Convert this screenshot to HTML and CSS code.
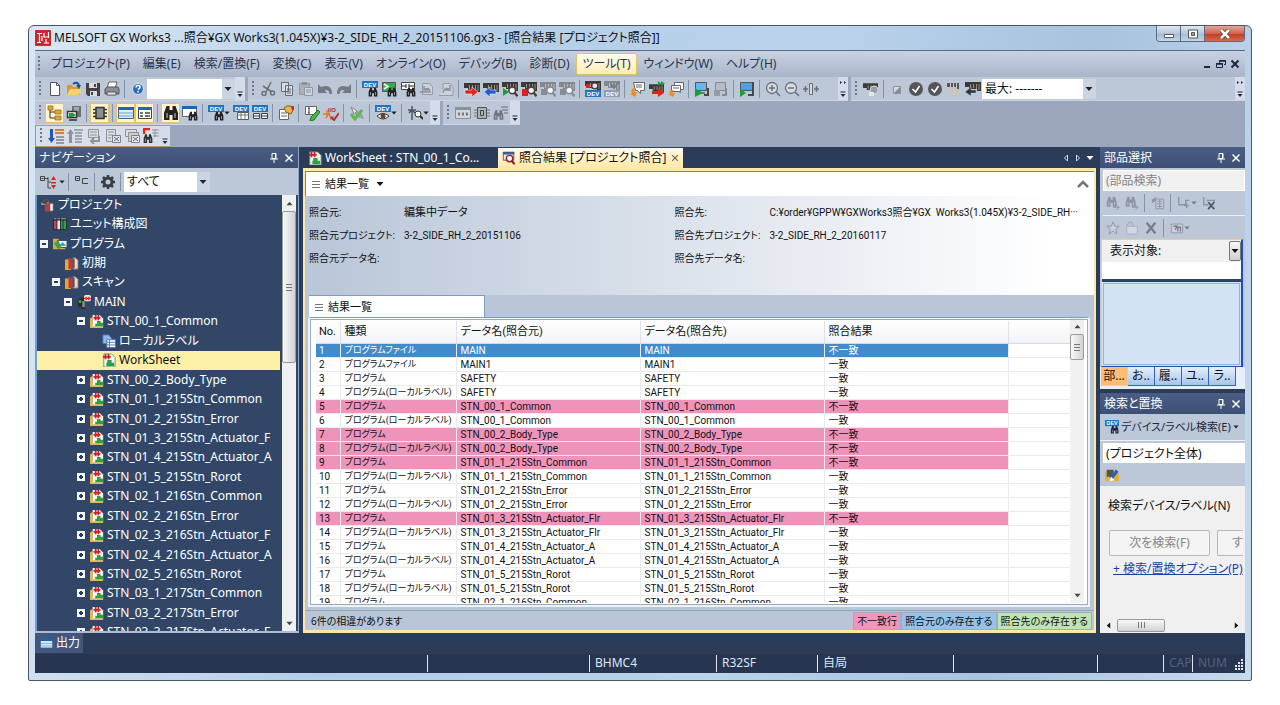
FILE: index.html
```html
<!DOCTYPE html>
<html lang="ja">
<head>
    <meta charset="utf-8">
    <title>MELSOFT GX Works3</title>
    <link rel="stylesheet" href="styles.css">
</head>
<body>

<!-- icons -->
<svg class="sprite" aria-hidden="true">
    <symbol id="logo" viewBox="0 0 16 16"><rect width="16" height="16" rx="1" fill="#d3232b"/><path d="M2 3.500h5M4.500 4v8M2 12.500h4M9 3v4h4M9 13h5M11 9v4M7 6v5M13.500 2v6" stroke="#fff" stroke-width="1.200" fill="none"/></symbol>
    <symbol id="bino" viewBox="0 0 16 16"><path d="M1 15V8l2.500-7h3v4h3V1h3L15 8v7H9.500v-5h-3v5z" fill="currentColor"/><path d="M4 8v5M12 8v5" stroke="#bcc7d8"/></symbol>
    <symbol id="glass" viewBox="0 0 16 16"><circle cx="7" cy="7" r="4.500" fill="#fff" fill-opacity=".85" stroke="currentColor" stroke-width="2"/><path d="M10 10l4 5" stroke="currentColor" stroke-width="3"/></symbol>
    <symbol id="module" viewBox="0 0 16 10"><path d="M0 0h16v9h-4V7H4V5H0z" fill="#3c3836"/><path d="M5.500 2v4M8.500 2v4M11.500 2v5M14 2v6" stroke="#9a8f86"/></symbol>
    <symbol id="module-off" viewBox="0 0 16 10"><path d="M0 0h16v9h-4V7H4V5H0z" fill="#83888f"/><path d="M5.500 2v4M8.500 2v4M11.500 2v5M14 2v6" stroke="#b9bec6"/></symbol>
    <symbol id="dev" viewBox="0 0 16 16"><rect width="16" height="7" fill="#1d74c4"/><text x="8" y="6" class="badge">DEV</text></symbol>

    <symbol id="new" viewBox="0 0 16 16"><path d="M3.500 1.500h6l3 3v10h-9z" fill="#fff" stroke="#555"/><path d="M9.500 1.500v3h3" fill="none" stroke="#555"/></symbol>
    <symbol id="open" viewBox="0 0 16 16"><path d="M1 14V4h5l1 2h7v8z" fill="#d99a2b"/><path d="M1 14l3-6h12l-3 6z" fill="#f8cf69"/><path d="M7 3q4-3 6 1" fill="none" stroke="#1d4f9c" stroke-width="2"/><path d="M10 4h5l-2 4z" fill="#1d4f9c"/></symbol>
    <symbol id="save" viewBox="0 0 16 16"><path d="M1 2h14v13H3l-2-2z" fill="#45413f"/><path d="M4 2h8v5H4zM5 10h7v5H5z" fill="#d8dde5"/><path d="M9 3h2v3H9zM6 11h2v3H6z" fill="#45413f"/></symbol>
    <symbol id="print" viewBox="0 0 16 16"><path d="M5 1h8l-2 6H3z" fill="#fff" stroke="#666"/><path d="M1 8l2-2h11l1 2v5H1z" fill="#8b8f95" stroke="#555"/><path d="M3 11h9v3H3z" fill="#e8ebee" stroke="#555"/></symbol>
    <symbol id="help" viewBox="0 0 16 16"><circle cx="8" cy="8" r="5.500" fill="#2e6cc0" stroke="#dbe7f6"/><path d="M6 6.500q0-2 2-2t2 1.700q0 1-2 2.300M8 10v1.500" fill="none" stroke="#fff" stroke-width="1.500"/></symbol>
    <symbol id="cut" viewBox="0 0 16 16"><path d="M11 1L6 11M3 5l9 6" stroke="#6d7279" stroke-width="1.600"/><circle cx="4" cy="12.500" r="2" fill="none" stroke="#6d7279" stroke-width="1.500"/><circle cx="12.500" cy="12" r="2" fill="none" stroke="#6d7279" stroke-width="1.500"/></symbol>
    <symbol id="copy" viewBox="0 0 16 16"><path d="M2.500 1.500h7v9h-7zM6.500 4.500h7v10h-7z" fill="#d9dee6" stroke="#666b73"/><path d="M8 8h4M8 10h4M8 12h4" stroke="#666b73"/></symbol>
    <symbol id="paste" viewBox="0 0 16 16"><path d="M1.500 2.500h10v11h-10z" fill="#aab2be" stroke="#9098a3"/><path d="M4 1h5v3H4z" fill="#8a919c"/><path d="M6.500 6.500h8v8h-8z" fill="#ccd3de" stroke="#9098a3"/><path d="M8 9h5M8 11h5" stroke="#9098a3"/></symbol>
    <symbol id="undo" viewBox="0 0 16 16"><path d="M1 3v9h9L7.500 9.500q4-2 5 3.500H15Q15 2 4 6z" fill="#747a83"/></symbol>
    <symbol id="redo" viewBox="0 0 16 16"><path d="M15 3v9H6l2.500-2.500q-4-2-5 3.500H1Q1 2 12 6z" fill="#747a83"/></symbol>
    <symbol id="devfind" viewBox="0 0 16 16"><use href="#dev" width="16" height="16"/><use href="#bino" x="6" y="6" width="10" height="10"/></symbol>
    <symbol id="cmdfind" viewBox="0 0 16 16"><path d="M1.500 1.500h13v9h-13z" fill="#2fae4d" stroke="#555"/><path d="M3 3l4 2.500L3 8" stroke="#fff" fill="none" stroke-width="1.500"/><use href="#bino" x="6" y="6" width="10" height="10"/></symbol>
    <symbol id="contactfind" viewBox="0 0 16 16"><path d="M1.500 1.500h13v7h-13z" fill="#fff" stroke="#444"/><path d="M2 5h4M6 3v4M9 3v4M9 5h5" stroke="#222"/><use href="#bino" x="6" y="6" width="10" height="10"/></symbol>
    <symbol id="docundo" viewBox="0 0 16 16"><path d="M3.500 2.500h7l3 3v8h-10z" fill="#ccd2dc" stroke="#969da8"/><path d="M5 5v4h4M6 8q4-2 5 3H1" fill="none" stroke="#8b929d" stroke-width="1.500"/></symbol>
    <symbol id="docredo" viewBox="0 0 16 16"><path d="M1 14.500h14v-9l-3-3H5v6" fill="#ccd2dc" stroke="#969da8"/><path d="M12 4v5H7M11 8q-5-2-6 4" fill="none" stroke="#8b929d" stroke-width="1.500"/></symbol>
    <symbol id="plcwrite" viewBox="0 0 16 16"><use href="#module" y="2" width="16" height="10"/><path d="M1 9h7V6l6 5-6 5v-3H1z" fill="#e5231e" stroke="#fff" stroke-width=".5"/></symbol>
    <symbol id="plcread" viewBox="0 0 16 16"><use href="#module" y="2" width="16" height="10"/><path d="M13 9H7V6l-6 5 6 5v-3h6z" fill="#1e5fd0" stroke="#fff" stroke-width=".5"/></symbol>
    <symbol id="monon" viewBox="0 0 16 16"><use href="#module" y="1" width="16" height="10"/><path d="M1 7l6 4-6 4z" fill="#1aa037"/><g color="#4b3a39"><use href="#glass" x="5" y="4" width="12" height="12"/></g></symbol>
    <symbol id="monoff" viewBox="0 0 16 16"><use href="#module" y="1" width="16" height="10"/><path d="M1 8h6v7H1z" fill="#d8231f"/><g color="#4b3a39"><use href="#glass" x="5" y="4" width="12" height="12"/></g></symbol>
    <symbol id="mongray" viewBox="0 0 16 16"><use href="#module-off" y="1" width="16" height="10"/><path d="M1 8h6v6H1z" fill="#868c95"/><g color="#868c95"><use href="#glass" x="5" y="4" width="12" height="12"/></g></symbol>
    <symbol id="devmon" viewBox="0 0 16 16"><use href="#module" width="16" height="10"/><path d="M1 3h4v4H1z" fill="#d8231f"/><g color="#4b3a39"><use href="#glass" x="5" y="0" width="11" height="11"/></g><use href="#dev" y="9" width="16" height="16"/></symbol>
    <symbol id="devmongray" viewBox="0 0 16 16"><use href="#module-off" width="16" height="10"/><path d="M7 3l3 4 5-6" stroke="#777d86" stroke-width="2" fill="none"/><path d="M0 9h16v7H0z" fill="#969da8"/><text x="8" y="15" class="badge">DEV</text></symbol>
    <symbol id="conv" viewBox="0 0 16 16"><path d="M3.500 1.500h11v8h-4v3l-3-3h-2z" fill="#fff" stroke="#666"/><path d="M6 4h6M6 6h6" stroke="#666"/><path d="M4 7q-4 1-2 6H0l5 3 2-5H5q-2-2 1-3z" fill="#f08a1c"/></symbol>
    <symbol id="onlineconv" viewBox="0 0 16 16"><use href="#module" y="3" width="15" height="10"/><path d="M3 10h6V7l6 5-6 4v-3H3z" fill="#e5231e"/><path d="M9 0l3 2.500L9 5zM12 0l4 2.500L12 5z" fill="#1aa037"/></symbol>
    <symbol id="allconv" viewBox="0 0 16 16"><path d="M6.500 1.500h9v7h-3v3l-4-3h-2z" fill="#fff" stroke="#666"/><path d="M3.500 4.500h9v6h-9z" fill="#fff" stroke="#666"/><path d="M5 7h6" stroke="#666"/><path d="M4 9q-4 1-2 4H0l5 3 2-4H5q-2-1 1-3z" fill="#f08a1c"/></symbol>
    <symbol id="simstart" viewBox="0 0 16 16"><path d="M1.500 1.500h11v8h-11z" fill="#65b7ef" stroke="#555"/><path d="M3 11h8v2H3z" fill="#777"/><path d="M1 7l8 5-8 4z" fill="#1aa037"/><path d="M14 7v7h-4" fill="none" stroke="#4a4745" stroke-width="2"/></symbol>
    <symbol id="simstop" viewBox="0 0 16 16"><path d="M2.500 1.500h10v8h-10z" fill="#b5bcc7" stroke="#858b94"/><path d="M1 9h6v6H1z" fill="#959ba5"/><path d="M13 7v7H9" fill="none" stroke="#858b94" stroke-width="2"/></symbol>
    <symbol id="syssim" viewBox="0 0 16 16"><path d="M1.500 1.500h12v8h-12z" fill="#4d9fe2" stroke="#555"/><path d="M1 8l6 4-6 4zM9 12h5" fill="#1aa037"/><path d="M14 1v13H9" fill="none" stroke="#4a4745" stroke-width="2"/></symbol>
    <symbol id="zoomin" viewBox="0 0 16 16"><circle cx="7" cy="7" r="5.500" fill="#d5dbe5" stroke="#6a6f77" stroke-width="1.300"/><path d="M11 11l4 4M4 7h6M7 4v6" stroke="#6a6f77" stroke-width="1.500"/></symbol>
    <symbol id="zoomout" viewBox="0 0 16 16"><circle cx="7" cy="7" r="5.500" fill="#d5dbe5" stroke="#6a6f77" stroke-width="1.300"/><path d="M11 11l4 4M4 7h6" stroke="#6a6f77" stroke-width="1.500"/></symbol>
    <symbol id="fit" viewBox="0 0 16 16"><path d="M6.500 2.500h3v11h-3z" fill="#d5dbe5" stroke="#6a6f77"/><path d="M0 8h5M16 8h-5M2.500 5v6M13.500 5v6" stroke="#6a6f77" stroke-width="1.500"/></symbol>
    <symbol id="modsel" viewBox="0 0 16 16"><use href="#module" y="2" width="15" height="10"/><circle cx="11" cy="9" r="4" fill="#9a9fa6" stroke="#d0d5dc"/><path d="M6 11h5v4H6z" fill="#e3e6ea"/></symbol>
    <symbol id="stopbox" viewBox="0 0 16 16"><path d="M4.500 5.500h7v7h-7z" fill="#d5d8dc" stroke="#8d929a"/><path d="M11 6v6H5z" fill="#858b94"/></symbol>
    <symbol id="okball" viewBox="0 0 16 16"><circle cx="8" cy="8" r="7" fill="#55565a"/><path d="M4.500 8l3 3 4-6" fill="none" stroke="#fff" stroke-width="1.600"/></symbol>
    <symbol id="modhold" viewBox="0 0 16 16"><path d="M3 6h11v8H3z" fill="#c9c6c0"/><path d="M1 2h12v6h-2V6H1z" fill="#5a5653"/><path d="M4.500 2v4M7.500 2v4M10.500 2v5" stroke="#bcc7d8"/></symbol>
    <symbol id="modback" viewBox="0 0 16 16"><use href="#module" y="1" width="16" height="10"/><path d="M11 9H6V6l-6 5 6 4v-3h5z" fill="#333" stroke="#bcc7d8" stroke-width=".5"/></symbol>

    <symbol id="navtree" viewBox="0 0 16 16"><path d="M3 4v9h6M3 7h6" fill="none" stroke="#333"/><path d="M1 1h5v4H1zM8 5h6v4H8zM8 11h6v4H8z" fill="#e8a735" stroke="#8b5f13" stroke-width=".7"/></symbol>
    <symbol id="connect" viewBox="0 0 16 16"><path d="M6 1h9v11H6z" fill="#6c7178"/><path d="M8 3h5M8 5h5" stroke="#ddd"/><path d="M1.500 6.500h9v6h-9z" fill="#fff" stroke="#333" stroke-width="1.500"/><path d="M3 8h4l3 2-3 2H3z" fill="#1aa037"/><path d="M3 15h8" stroke="#333" stroke-width="1.500"/></symbol>
    <symbol id="chip" viewBox="0 0 16 16"><path d="M1 4.500h14M1 8h14M1 11.500h14" stroke="#333" stroke-width="1.500"/><path d="M4 2.500h8v11H4z" fill="#8c8e90" stroke="#333" stroke-width="1.500"/></symbol>
    <symbol id="win" viewBox="0 0 16 16"><path d="M.500 2.500h15v11H.500z" fill="#dbeefa" stroke="#39688f"/><path d="M0 2h16v3H0z" fill="#1d66b5"/><path d="M1 8h14M1 11h14" stroke="#6aa4cf"/></symbol>
    <symbol id="prog" viewBox="0 0 16 16"><path d="M1.500 2.500h13v11h-13z" fill="#fff" stroke="#444"/><path d="M1 2h14v3H1z" fill="#1d66b5"/><path d="M3 8h3M3 11h3M8 8h5M8 11h5" stroke="#444" stroke-width="1.500"/></symbol>
    <symbol id="finder" viewBox="0 0 16 16"><use href="#bino" width="16" height="16"/></symbol>
    <symbol id="findres" viewBox="0 0 16 16"><path d="M.500 1.500h14v10H.500z" fill="#fff" stroke="#666"/><path d="M0 1h15v3H0z" fill="#1d66b5"/><use href="#bino" x="6" y="6" width="10" height="10"/></symbol>
    <symbol id="devtable" viewBox="0 0 16 16"><path d="M4.500 7.500h11v7h-11z" fill="#fff" stroke="#555"/><path d="M4 10h12M8 7v8M12 7v8" stroke="#777"/><use href="#dev" width="16" height="16"/></symbol>
    <symbol id="devbatch" viewBox="0 0 16 16"><path d="M1.500 8.500h6v5h-6zM9.500 8.500h6v5h-6z" fill="#eee" stroke="#444"/><path d="M1 11h7M9 11h7" stroke="#444"/><use href="#dev" width="16" height="16"/></symbol>
    <symbol id="prop" viewBox="0 0 16 16"><path d="M1.500 4.500h9v10h-9z" fill="#fff" stroke="#666"/><path d="M3 8h6M3 11h6" stroke="#666"/><path d="M6 3l3-2h4l2 4-2 4-5-2z" fill="#e9b64a" stroke="#8b5f13"/><path d="M13 1h3v4h-2z" fill="#c9302c"/></symbol>
    <symbol id="edit" viewBox="0 0 16 16"><path d="M1.500 1.500h11v8h-11z" fill="#fff" stroke="#666"/><path d="M5 3v5M4 3h2M4 8h2" stroke="#333"/><path d="M14 5l2 2-6 8-4 1 1-4z" fill="#42b649" stroke="#22752a"/></symbol>
    <symbol id="io" viewBox="0 0 16 16"><text x="9" y="7" class="badge io">I/O</text><path d="M0 9h4V5M3 13l3-5 2 6 3-3" fill="none" stroke="#e8772b" stroke-width="1.500"/><path d="M8 12l3 3 5-7" fill="none" stroke="#b3303a" stroke-width="2"/></symbol>
    <symbol id="check" viewBox="0 0 16 16"><path d="M2 2l5 3 6 4 2 5-5-1-6-5z" fill="#9ca2aa"/><path d="M2 2l6 4-3 3z" fill="#e3e7ed" stroke="#888"/><path d="M2 9l4 5 7-9" fill="none" stroke="#5cb84f" stroke-width="3"/></symbol>
    <symbol id="deveye" viewBox="0 0 16 16"><path d="M2 11q6-5 12 0-6 6-12 0z" fill="#fff" stroke="#333"/><circle cx="8" cy="11" r="2.500" fill="#7b3b1c"/><use href="#dev" width="16" height="16"/></symbol>
    <symbol id="probe" viewBox="0 0 16 16"><path d="M5 1v14M1 5h8M2 8l3-3 3 3" fill="none" stroke="#555" stroke-width="1.500"/><circle cx="11" cy="9" r="3" fill="#fff" stroke="#333"/><path d="M13 11l3 3" stroke="#333" stroke-width="2"/></symbol>
    <symbol id="wingray" viewBox="0 0 16 16"><path d="M.500 2.500h15v11H.500z" fill="#d2d7de" stroke="#888e97"/><path d="M0 2h16v3H0z" fill="#8c9199"/><path d="M3 9h2M7 9h2M11 9h2" stroke="#777" stroke-width="3"/></symbol>
    <symbol id="chipgray" viewBox="0 0 16 16"><path d="M3.500 2.500h9v11h-9z" fill="#aeb3bb" stroke="#555"/><path d="M6.500 5.500h3v5h-3z" fill="none" stroke="#444"/><path d="M0 5h3M0 8h3M0 11h3M13 5h3M13 8h3M13 11h3" stroke="#777"/></symbol>
    <symbol id="findgray" viewBox="0 0 16 16"><g color="#70757d"><use href="#bino" y="4" width="11" height="12"/></g><path d="M8 2h7M9 5h6M11 8h4" stroke="#858b94" stroke-width="1.500"/></symbol>
    <symbol id="linedown" viewBox="0 0 16 16"><path d="M2 1h3v9h2l-3.500 5L0 10h2z" fill="#2457b5"/><path d="M7 2h9M7 5h9" stroke="#e07b2f" stroke-width="2"/><path d="M8 9h8M8 12h8M8 15h8" stroke="#555"/></symbol>
    <symbol id="lineup" viewBox="0 0 16 16"><path d="M2 15h3V6h2L3.500 1 0 6h2z" fill="#8e939b"/><path d="M7 2h9M8 5h7M8 8h7M8 11h7M8 14h7" stroke="#8e939b" stroke-width="1.500"/></symbol>
    <symbol id="lineget" viewBox="0 0 16 16"><path d="M2.500 1.500h10v8h-10z" fill="#ddd" stroke="#8e939b"/><path d="M4 4h7M4 7h7" stroke="#8e939b"/><path d="M13 8v5H6M8 10l-3 3 3 3" fill="none" stroke="#8e939b" stroke-width="2"/></symbol>
    <symbol id="linedel" viewBox="0 0 16 16"><path d="M1.500 1.500h9v12h-9z" fill="#ddd" stroke="#8e939b"/><path d="M3 4h6M3 7h5M3 10h3" stroke="#8e939b"/><path d="M7.500 7.500h8v7h-8z" fill="#e4e7ec" stroke="#7d828a"/><path d="M9 9l5 4M14 9l-5 4" stroke="#666"/></symbol>
    <symbol id="linedelall" viewBox="0 0 16 16"><path d="M1.500 1.500h11v7h-11z" fill="#ddd" stroke="#8e939b"/><path d="M4.500 4.500h10v9h-10z" fill="#ccc" stroke="#8e939b"/><path d="M7.500 7.500h8v7h-8z" fill="#e4e7ec" stroke="#7d828a"/><path d="M9 9l5 4M14 9l-5 4" stroke="#666"/></symbol>
    <symbol id="findjump" viewBox="0 0 16 16"><g color="#333"><use href="#bino" y="5" width="10" height="11"/></g><path d="M1 6V1h6" fill="none" stroke="#e5231e" stroke-width="2.500"/><path d="M9 2h7M9 5h7M10 8h6M12 1v8" stroke="#8e939b"/></symbol>

    <symbol id="more" viewBox="0 0 8 20"><path d="M1.500 13h5" stroke="#1b293e"/><path d="M1.500 15h5l-2.500 3z" fill="#1b293e"/></symbol>
    <symbol id="more2" viewBox="0 0 8 20"><path d="M1 2l2 1.500L1 5zM5 2l2 1.500L5 5z" fill="#1b293e"/><path d="M1.500 13h5" stroke="#1b293e"/><path d="M1.500 15h5l-2.500 3z" fill="#1b293e"/></symbol>
    <symbol id="down" viewBox="0 0 8 8"><path d="M.500 2h7L4 6z" fill="currentColor"/></symbol>
    <symbol id="up" viewBox="0 0 8 8"><path d="M.500 6h7L4 2z" fill="currentColor"/></symbol>
    <symbol id="lt" viewBox="0 0 8 8"><path d="M6 .500v7L2 4z" fill="currentColor"/></symbol>
    <symbol id="rt" viewBox="0 0 8 8"><path d="M2 .500v7L6 4z" fill="currentColor"/></symbol>
    <symbol id="pin" viewBox="0 0 10 10"><path d="M3 .500h4v5H3zM1 6h8M5 6v4" fill="none" stroke="currentColor"/><path d="M6 1h1v4H6z" fill="currentColor"/></symbol>
    <symbol id="x" viewBox="0 0 10 10"><path d="M1.500 1.500l7 7M8.500 1.500l-7 7" stroke="currentColor" stroke-width="1.500"/></symbol>

    <symbol id="expand" viewBox="0 0 20 16"><path d="M1.500 2.500h4v4h-4zM2.500 4.500h2M6 4.500h3M9 3v11M9 8h3M9 14h3" fill="none" stroke="#444"/><path d="M12 6l2.500-4L17 6zM12 11l2.500 4L17 11zM12 8h5v1.500h-5z" fill="#e5231e"/></symbol>
    <symbol id="collapse" viewBox="0 0 16 16"><path d="M1.500 2.500h4v4h-4zM2.500 4.500h2M14 4.500H8.500v5H14" fill="none" stroke="#444"/></symbol>
    <symbol id="gear" viewBox="0 0 16 16"><circle cx="8" cy="8" r="4" fill="none" stroke="#3b3d40" stroke-width="3"/><path d="M8 1v3M8 12v3M1 8h3M12 8h3M3 3l2 2M11 11l2 2M13 3l-2 2M5 11l-2 2" stroke="#3b3d40" stroke-width="2.500"/></symbol>
    <symbol id="project" viewBox="0 0 16 16"><path d="M0 5l6-4 3 3v11H5V8H0z" fill="#8c8f94"/><path d="M0 5l6-4 3 2-4 4z" fill="#4a4a4d"/><path d="M5 6h4v9H5z" fill="#c03a35"/><path d="M10 6h4v9h-4z" fill="#eee" stroke="#555"/></symbol>
    <symbol id="unit" viewBox="0 0 16 16"><path d="M0 1h16v14H0z" fill="#23262b"/><path d="M1 4h3v10H1z" fill="#b9475a"/><path d="M5 4h3v10H5z" fill="#e6e6e6"/><path d="M9 4h2v10H9zM12 4h3v10h-3z" fill="#2fa04f"/><path d="M1 2h3M5 2h3M9 2h6" stroke="#b6c0cc"/></symbol>
    <symbol id="program" viewBox="0 0 16 16"><path d="M0 2h6l1 2h7v10H0z" fill="#e0a93f"/><path d="M5 4h11v8H5z" fill="#dff0f8" stroke="#345"/><path d="M7 10l4-4 4 4z" fill="#3c8fd1"/><path d="M1 7l5-3 4 8-4 2z" fill="#3ba04b"/></symbol>
    <symbol id="books" viewBox="0 0 16 16"><path d="M0 4h4l1-2 2 14H0z" fill="#e0a93f"/><path d="M4 3h4v12H4z" fill="#d2302c"/><path d="M9 2h3l3 3v10H9z" fill="#ddd" stroke="#666"/><path d="M9 3h2v11H9z" fill="#9a3a30"/></symbol>
    <symbol id="main" viewBox="0 0 16 16"><path d="M1 6l4-3h4v13H5v-3H1z" fill="#26282b"/><path d="M2 6h3v3H2z" fill="#3fb449"/><path d="M6 7h3v7H6z" fill="#888"/><rect x="8" width="8" height="7" rx="2" fill="#f5e9e9"/><path d="M10.500 2v4M13.500 2v4M8 4h8" stroke="#d2302c" stroke-width="1.500"/></symbol>
    <symbol id="sheet" viewBox="0 0 16 16"><path d="M2 1h9l4 4v11H2z" fill="#f2f6ee" stroke="#6f8f74"/><path d="M1 4.500h9M4 1v6M7.500 1v6" stroke="#d2202a" stroke-width="2"/><path d="M6 8h5v3h3v4H5v-4h1z" fill="#2f9e44"/></symbol>
    <symbol id="pou" viewBox="0 0 16 16"><path d="M0 5l3-2v10h12v3H0z" fill="#e8b74c"/><path d="M3 1h8l4 4v9H3z" fill="#f7f7ee"/><path d="M4 4.500h8M6.500 1v6M9.500 1v6" stroke="#d2202a" stroke-width="2"/><path d="M8 8h4v2h3v4H6v-3h2z" fill="#2f9e44"/></symbol>
    <symbol id="label" viewBox="0 0 16 16"><path d="M1 1h7l3 4v6H1z" fill="#8fb7e8" stroke="#4472b5"/><path d="M5.500 6.500h10v9h-10z" fill="#fff" stroke="#4472b5"/><path d="M5 9.500h11M8.500 7v9M5 12.500h11" stroke="#4472b5"/></symbol>
    <symbol id="verify" viewBox="0 0 16 16"><path d="M1.500 1.500h12v9h-12z" fill="#dfe5ee" stroke="#4b5a78"/><path d="M1 1h13v3H1z" fill="#3f5a92"/><g color="#8d2626"><use href="#glass" x="3" y="3" width="13" height="13"/></g></symbol>
    <symbol id="lines" viewBox="0 0 8 10"><path d="M0 2.500h8M0 5.500h8M0 8.500h8" stroke="#777"/></symbol>
    <symbol id="chev" viewBox="0 0 12 8"><path d="M1 7l5-5 5 5" fill="none" stroke="#777" stroke-width="2.500"/></symbol>
    <symbol id="findnext" viewBox="0 0 16 16"><g color="#8d95a1"><use href="#bino" width="13" height="13"/></g><path d="M8 13h7M12 10l3 3-3 3" fill="none" stroke="#8d95a1"/></symbol>
    <symbol id="book" viewBox="0 0 16 16"><path d="M1 4l5-3v4L1 8z" fill="#8d95a1"/><path d="M5.500 3.500h9v11h-9z" fill="#c6cdd8" stroke="#8d95a1"/><path d="M7 6h6M7 9h6M7 12h6M10 4v10" stroke="#8d95a1"/></symbol>
    <symbol id="addlbl" viewBox="0 0 16 16"><path d="M2 1v9h8V5h4M11 8v6M8 11h6" fill="none" stroke="#8d95a1" stroke-width="1.500"/></symbol>
    <symbol id="dellbl" viewBox="0 0 16 16"><path d="M2 1v9h5M5 5h9v3" fill="none" stroke="#8d95a1" stroke-width="1.500"/><path d="M7 7l7 8M14 7l-7 8" stroke="#555a62" stroke-width="2"/></symbol>
    <symbol id="star" viewBox="0 0 16 16"><path d="M8 1l2 5h5l-4 3.500L12.500 15 8 11.500 3.500 15 5 9.500 1 6h5z" fill="#c9d0db" stroke="#8d95a1"/></symbol>
    <symbol id="folder" viewBox="0 0 16 16"><path d="M2 6h12v9H2z" fill="#d3d8e0" stroke="#a7aeb9"/><path d="M2 5q3-5 6-3l1 3" fill="none" stroke="#a7aeb9" stroke-width="1.500"/></symbol>
    <symbol id="delete" viewBox="0 0 16 16"><path d="M3 2l10 12M13 2L3 14" stroke="#757b85" stroke-width="2.500"/></symbol>
    <symbol id="disp" viewBox="0 0 16 16"><path d="M1.500 3.500h13v10h-13z" fill="#cbd1db" stroke="#8d95a1"/><path d="M4 6h4l-2 4M9 12V7h3v5" fill="none" stroke="#757b85" stroke-width="1.500"/></symbol>
    <symbol id="option" viewBox="0 0 16 16"><path d="M0 4h5l1 2h10v9H0z" fill="#e3b03f"/><path d="M2 2h8v8H2z" fill="#555"/><path d="M7 12l7-9" stroke="#2b62b5" stroke-width="4"/><path d="M5 15l2-5 4 4z" fill="#fff"/></symbol>
</svg>

<div class="window">
    <div class="titlebar">
        <svg class="ic"><use href="#logo"/></svg>
        <h1>MELSOFT GX Works3 ...照合¥GX Works3(1.045X)¥3-2_SIDE_RH_2_20151106.gx3 - [照合結果 [プロジェクト照合]]</h1>
        <div class="winbtns">
            <button aria-label="最小化"><svg viewBox="0 0 12 10"><path d="M1.500 5.500h9v3h-9z" fill="#fff" stroke="#555"/></svg></button>
            <button aria-label="最大化"><svg viewBox="0 0 12 10"><path d="M1.500 1h9v8h-9z" fill="#fff" stroke="#555"/><path d="M4.500 3.500h3v3h-3z" fill="#9ab" stroke="#555"/></svg></button>
            <button class="close" aria-label="閉じる"><svg viewBox="0 0 12 10"><path d="M2 1l8 8M10 1L2 9" stroke="#5a3030" stroke-width="4"/><path d="M2 1l8 8M10 1L2 9" stroke="#fff" stroke-width="2.500"/></svg></button>
        </div>
    </div>

    <div class="client">
        <nav class="menubar">
            <span class="grip"></span>
            <button>プロジェクト(P)</button>
            <button>編集(E)</button>
            <button>検索/置換(F)</button>
            <button>変換(C)</button>
            <button>表示(V)</button>
            <button>オンライン(O)</button>
            <button>デバッグ(B)</button>
            <button>診断(D)</button>
            <button class="hot">ツール(T)</button>
            <button>ウィンドウ(W)</button>
            <button>ヘルプ(H)</button>
            <div class="mdi">
                <button aria-label="最小化"><svg viewBox="0 0 10 10"><path d="M2 8h6" stroke="#1b293e" stroke-width="2"/></svg></button>
                <button aria-label="元に戻す"><svg viewBox="0 0 10 10"><path d="M3.500 4V1.500h6v4H8M.500 4.500h6v4h-6z" fill="none" stroke="#1b293e"/><path d="M3 2h7M0 5h7" stroke="#1b293e" stroke-width="1.500"/></svg></button>
                <button aria-label="閉じる"><svg viewBox="0 0 10 10"><path d="M1.500 1.500l7 7M8.500 1.500l-7 7" stroke="#1b293e" stroke-width="2"/></svg></button>
            </div>
        </nav>

        <div class="toolrow">
            <div class="toolbar">
                <span class="grip"></span>
                <button aria-label="新規"><svg><use href="#new"/></svg></button>
                <button aria-label="開く"><svg><use href="#open"/></svg></button>
                <button aria-label="保存"><svg><use href="#save"/></svg></button>
                <button aria-label="印刷"><svg><use href="#print"/></svg></button>
                <span class="sep"></span>
                <button aria-label="ヘルプ"><svg><use href="#help"/></svg></button>
                <span class="combo quick"><select aria-label="検索"><option></option></select><svg><use href="#down"/></svg></span>
                <button class="more" aria-label="オプション"><svg><use href="#more"/></svg></button>
            </div>
            <div class="toolbar edit">
                <span class="grip"></span>
                <button aria-label="切り取り"><svg><use href="#cut"/></svg></button>
                <button aria-label="コピー"><svg><use href="#copy"/></svg></button>
                <button aria-label="貼り付け"><svg><use href="#paste"/></svg></button>
                <button aria-label="元に戻す"><svg><use href="#undo"/></svg></button>
                <button aria-label="やり直し"><svg><use href="#redo"/></svg></button>
                <span class="sep"></span>
                <button aria-label="デバイス検索"><svg><use href="#devfind"/></svg></button>
                <button aria-label="命令検索"><svg><use href="#cmdfind"/></svg></button>
                <button aria-label="接点検索"><svg><use href="#contactfind"/></svg></button>
                <button aria-label="前へ"><svg><use href="#docundo"/></svg></button>
                <button aria-label="次へ"><svg><use href="#docredo"/></svg></button>
                <span class="sep"></span>
                <button aria-label="書込み"><svg><use href="#plcwrite"/></svg></button>
                <button aria-label="読出し"><svg><use href="#plcread"/></svg></button>
                <button aria-label="モニタ開始"><svg><use href="#monon"/></svg></button>
                <button aria-label="モニタ停止"><svg><use href="#monoff"/></svg></button>
                <button aria-label="ウォッチ開始"><svg><use href="#mongray"/></svg></button>
                <button aria-label="ウォッチ停止"><svg><use href="#mongray"/></svg></button>
                <span class="sep"></span>
                <button aria-label="デバイスモニタ"><svg><use href="#devmon"/></svg></button>
                <button aria-label="デバイス確認"><svg><use href="#devmongray"/></svg></button>
                <span class="sep"></span>
                <button aria-label="変換"><svg><use href="#conv"/></svg></button>
                <button aria-label="RUN中書込み"><svg><use href="#onlineconv"/></svg></button>
                <button aria-label="全変換"><svg><use href="#allconv"/></svg></button>
                <span class="sep"></span>
                <button aria-label="シミュレーション開始"><svg><use href="#simstart"/></svg></button>
                <button aria-label="シミュレーション停止"><svg><use href="#simstop"/></svg></button>
                <span class="sep"></span>
                <button aria-label="システムシミュレーション"><svg><use href="#syssim"/></svg></button>
                <span class="sep"></span>
                <button aria-label="拡大"><svg><use href="#zoomin"/></svg></button>
                <button aria-label="縮小"><svg><use href="#zoomout"/></svg></button>
                <button aria-label="幅に合わせる"><svg><use href="#fit"/></svg></button>
                <button class="more end" aria-label="オプション"><svg><use href="#more2"/></svg></button>
            </div>
            <div class="toolbar rest">
                <span class="grip"></span>
                <button aria-label="ユニット"><svg><use href="#modsel"/></svg></button>
                <span class="sep"></span>
                <button aria-label="停止"><svg><use href="#stopbox"/></svg></button>
                <button aria-label="確認"><svg><use href="#okball"/></svg></button>
                <button aria-label="全確認"><svg><use href="#okball"/></svg></button>
                <button aria-label="保持"><svg><use href="#modhold"/></svg></button>
                <button aria-label="戻す"><svg><use href="#modback"/></svg></button>
                <span class="combo max"><select aria-label="最大"><option>最大: -------</option></select><svg><use href="#down"/></svg></span>
                <button class="more end" aria-label="オプション"><svg><use href="#more2"/></svg></button>
            </div>
        </div>

        <div class="toolrow">
            <div class="toolbar">
                <span class="grip"></span>
                <button class="on" aria-label="ナビゲーション"><svg><use href="#navtree"/></svg></button>
                <button aria-label="接続先"><svg><use href="#connect"/></svg></button>
                <span class="sep"></span>
                <button class="on" aria-label="部品選択"><svg><use href="#chip"/></svg></button>
                <span class="sep"></span>
                <button class="on" aria-label="出力"><svg><use href="#win"/></svg></button>
                <button class="on" aria-label="進捗"><svg><use href="#prog"/></svg></button>
                <span class="sep"></span>
                <button class="on" aria-label="検索と置換"><svg><use href="#finder"/></svg></button>
                <button aria-label="検索結果"><svg><use href="#findres"/></svg></button>
                <span class="sep"></span>
                <button class="drop" aria-label="クロスリファレンス"><svg><use href="#devfind"/></svg><svg class="arr"><use href="#down"/></svg></button>
                <button aria-label="デバイス使用一覧"><svg><use href="#devtable"/></svg></button>
                <button aria-label="デバイス割付"><svg><use href="#devbatch"/></svg></button>
                <span class="sep"></span>
                <button aria-label="プロパティ"><svg><use href="#prop"/></svg></button>
                <span class="sep"></span>
                <button aria-label="ラベル編集"><svg><use href="#edit"/></svg></button>
                <button aria-label="入出力"><svg><use href="#io"/></svg></button>
                <span class="sep"></span>
                <button aria-label="チェック"><svg><use href="#check"/></svg></button>
                <span class="sep"></span>
                <button class="drop" aria-label="ウォッチ"><svg><use href="#deveye"/></svg><svg class="arr"><use href="#down"/></svg></button>
                <span class="sep"></span>
                <button class="drop" aria-label="計測"><svg><use href="#probe"/></svg><svg class="arr"><use href="#down"/></svg></button>
                <button class="more" aria-label="オプション"><svg><use href="#more"/></svg></button>
            </div>
            <div class="toolbar">
                <span class="grip"></span>
                <button aria-label="画面"><svg><use href="#wingray"/></svg></button>
                <button aria-label="部品"><svg><use href="#chipgray"/></svg></button>
                <button aria-label="検索"><svg><use href="#findgray"/></svg></button>
                <button class="more" aria-label="オプション"><svg><use href="#more"/></svg></button>
            </div>
        </div>

        <div class="toolrow last">
            <div class="toolbar framed">
                <span class="grip"></span>
                <button aria-label="次の相違"><svg><use href="#linedown"/></svg></button>
                <button aria-label="前の相違"><svg><use href="#lineup"/></svg></button>
                <button aria-label="取得"><svg><use href="#lineget"/></svg></button>
                <button aria-label="行削除"><svg><use href="#linedel"/></svg></button>
                <button aria-label="全削除"><svg><use href="#linedelall"/></svg></button>
                <button aria-label="ジャンプ"><svg><use href="#findjump"/></svg></button>
                <button class="more" aria-label="オプション"><svg><use href="#more"/></svg></button>
            </div>
        </div>

        <div class="dock">
            <section class="panel nav">
                <header><h2>ナビゲーション</h2><button aria-label="固定"><svg><use href="#pin"/></svg></button><button aria-label="閉じる"><svg><use href="#x"/></svg></button></header>
                <div class="navtools">
                    <button class="drop" aria-label="展開"><svg><use href="#expand"/></svg><svg class="arr"><use href="#down"/></svg></button>
                    <span class="sep"></span>
                    <button aria-label="折りたたみ"><svg><use href="#collapse"/></svg></button>
                    <span class="sep"></span>
                    <button aria-label="設定"><svg><use href="#gear"/></svg></button>
                    <span class="sep"></span>
                    <span class="combo all"><select aria-label="表示"><option>すべて</option></select><svg><use href="#down"/></svg></span>
                </div>
                <div class="treebox">
                    <ul class="tree">
                        <li class="l0"><svg><use href="#project"/></svg>プロジェクト</li>
                        <li class="l1"><i></i><svg><use href="#unit"/></svg>ユニット構成図</li>
                        <li class="l1"><button class="minus" aria-label="閉じる"></button><svg><use href="#program"/></svg>プログラム</li>
                        <li class="l2"><i></i><svg><use href="#books"/></svg>初期</li>
                        <li class="l2"><button class="minus" aria-label="閉じる"></button><svg><use href="#books"/></svg>スキャン</li>
                        <li class="l3"><button class="minus" aria-label="閉じる"></button><svg><use href="#main"/></svg>MAIN</li>
                        <li class="l4"><button class="minus" aria-label="閉じる"></button><svg><use href="#pou"/></svg>STN_00_1_Common</li>
                        <li class="l5"><i></i><svg><use href="#label"/></svg>ローカルラベル</li>
                        <li class="l5 selected"><i></i><svg><use href="#sheet"/></svg>WorkSheet</li>
                        <li class="l4"><button class="plus" aria-label="開く"></button><svg><use href="#pou"/></svg>STN_00_2_Body_Type</li>
                        <li class="l4"><button class="plus" aria-label="開く"></button><svg><use href="#pou"/></svg>STN_01_1_215Stn_Common</li>
                        <li class="l4"><button class="plus" aria-label="開く"></button><svg><use href="#pou"/></svg>STN_01_2_215Stn_Error</li>
                        <li class="l4"><button class="plus" aria-label="開く"></button><svg><use href="#pou"/></svg>STN_01_3_215Stn_Actuator_F</li>
                        <li class="l4"><button class="plus" aria-label="開く"></button><svg><use href="#pou"/></svg>STN_01_4_215Stn_Actuator_A</li>
                        <li class="l4"><button class="plus" aria-label="開く"></button><svg><use href="#pou"/></svg>STN_01_5_215Stn_Rorot</li>
                        <li class="l4"><button class="plus" aria-label="開く"></button><svg><use href="#pou"/></svg>STN_02_1_216Stn_Common</li>
                        <li class="l4"><button class="plus" aria-label="開く"></button><svg><use href="#pou"/></svg>STN_02_2_216Stn_Error</li>
                        <li class="l4"><button class="plus" aria-label="開く"></button><svg><use href="#pou"/></svg>STN_02_3_216Stn_Actuator_F</li>
                        <li class="l4"><button class="plus" aria-label="開く"></button><svg><use href="#pou"/></svg>STN_02_4_216Stn_Actuator_A</li>
                        <li class="l4"><button class="plus" aria-label="開く"></button><svg><use href="#pou"/></svg>STN_02_5_216Stn_Rorot</li>
                        <li class="l4"><button class="plus" aria-label="開く"></button><svg><use href="#pou"/></svg>STN_03_1_217Stn_Common</li>
                        <li class="l4"><button class="plus" aria-label="開く"></button><svg><use href="#pou"/></svg>STN_03_2_217Stn_Error</li>
                        <li class="l4"><button class="plus" aria-label="開く"></button><svg><use href="#pou"/></svg>STN_03_3_217Stn_Actuator_F</li>
                    </ul>
                    <div class="vscroll">
                        <button aria-label="上へ"><svg><use href="#up"/></svg></button>
                        <span class="thumb"></span>
                        <button aria-label="下へ"><svg><use href="#down"/></svg></button>
                    </div>
                </div>
            </section>

            <main class="doc">
                <div class="tabs">
                    <button class="tab"><svg><use href="#sheet"/></svg>WorkSheet : STN_00_1_Co...</button>
                    <button class="tab active"><svg><use href="#verify"/></svg>照合結果 [プロジェクト照合]<svg class="tx"><use href="#x"/></svg></button>
                    <div class="tabnav">
                        <button aria-label="前のタブ"><svg viewBox="0 0 8 8"><path d="M5.500 1v6L2.500 4z" fill="none" stroke="#cfd8e8"/></svg></button>
                        <button aria-label="次のタブ"><svg viewBox="0 0 8 8"><path d="M2.500 1v6l3-3z" fill="none" stroke="#cfd8e8"/></svg></button>
                        <button aria-label="タブ一覧"><svg><use href="#down"/></svg></button>
                    </div>
                </div>
                <div class="sheet">
                    <div class="sheethead"><svg class="ln"><use href="#lines"/></svg><button>結果一覧<svg><use href="#down"/></svg></button><button class="fold" aria-label="折りたたむ"><svg><use href="#chev"/></svg></button></div>
                    <dl class="info">
                        <dt>照合元:</dt><dd class="jp">編集中データ</dd>
                        <dt>照合先:</dt><dd>C:¥order¥GPPW¥GXWorks3照合¥GX&nbsp; Works3(1.045X)¥3-2_SIDE_RH···</dd>
                        <dt>照合元プロジェクト:</dt><dd>3-2_SIDE_RH_2_20151106</dd>
                        <dt>照合先プロジェクト:</dt><dd>3-2_SIDE_RH_2_20160117</dd>
                        <dt>照合元データ名:</dt><dd></dd>
                        <dt>照合先データ名:</dt><dd></dd>
                    </dl>
                    <div class="subtab"><svg class="ln"><use href="#lines"/></svg>結果一覧</div>
                    <div class="results">
                        <div class="rows">
                            <table>
                                <colgroup><col class="c-no"><col class="c-kind"><col class="c-name"><col class="c-name"><col class="c-name"><col></colgroup>
                                <thead>
                                    <tr><th>No.</th><th>種類</th><th>データ名(照合元)</th><th>データ名(照合先)</th><th>照合結果</th><th></th></tr>
                                </thead>
                                <tbody>
                                    <tr class="cur"><td>1</td><td>プログラムファイル</td><td>MAIN</td><td>MAIN</td><td>不一致</td><td></td></tr>
                                    <tr><td>2</td><td>プログラムファイル</td><td>MAIN1</td><td>MAIN1</td><td>一致</td><td></td></tr>
                                    <tr><td>3</td><td>プログラム</td><td>SAFETY</td><td>SAFETY</td><td>一致</td><td></td></tr>
                                    <tr><td>4</td><td>プログラム(ローカルラベル)</td><td>SAFETY</td><td>SAFETY</td><td>一致</td><td></td></tr>
                                    <tr class="diff"><td>5</td><td>プログラム</td><td>STN_00_1_Common</td><td>STN_00_1_Common</td><td>不一致</td><td></td></tr>
                                    <tr><td>6</td><td>プログラム(ローカルラベル)</td><td>STN_00_1_Common</td><td>STN_00_1_Common</td><td>一致</td><td></td></tr>
                                    <tr class="diff"><td>7</td><td>プログラム</td><td>STN_00_2_Body_Type</td><td>STN_00_2_Body_Type</td><td>不一致</td><td></td></tr>
                                    <tr class="diff"><td>8</td><td>プログラム(ローカルラベル)</td><td>STN_00_2_Body_Type</td><td>STN_00_2_Body_Type</td><td>不一致</td><td></td></tr>
                                    <tr class="diff"><td>9</td><td>プログラム</td><td>STN_01_1_215Stn_Common</td><td>STN_01_1_215Stn_Common</td><td>不一致</td><td></td></tr>
                                    <tr><td>10</td><td>プログラム(ローカルラベル)</td><td>STN_01_1_215Stn_Common</td><td>STN_01_1_215Stn_Common</td><td>一致</td><td></td></tr>
                                    <tr><td>11</td><td>プログラム</td><td>STN_01_2_215Stn_Error</td><td>STN_01_2_215Stn_Error</td><td>一致</td><td></td></tr>
                                    <tr><td>12</td><td>プログラム(ローカルラベル)</td><td>STN_01_2_215Stn_Error</td><td>STN_01_2_215Stn_Error</td><td>一致</td><td></td></tr>
                                    <tr class="diff"><td>13</td><td>プログラム</td><td>STN_01_3_215Stn_Actuator_Flr</td><td>STN_01_3_215Stn_Actuator_Flr</td><td>不一致</td><td></td></tr>
                                    <tr><td>14</td><td>プログラム(ローカルラベル)</td><td>STN_01_3_215Stn_Actuator_Flr</td><td>STN_01_3_215Stn_Actuator_Flr</td><td>一致</td><td></td></tr>
                                    <tr><td>15</td><td>プログラム</td><td>STN_01_4_215Stn_Actuator_A</td><td>STN_01_4_215Stn_Actuator_A</td><td>一致</td><td></td></tr>
                                    <tr><td>16</td><td>プログラム(ローカルラベル)</td><td>STN_01_4_215Stn_Actuator_A</td><td>STN_01_4_215Stn_Actuator_A</td><td>一致</td><td></td></tr>
                                    <tr><td>17</td><td>プログラム</td><td>STN_01_5_215Stn_Rorot</td><td>STN_01_5_215Stn_Rorot</td><td>一致</td><td></td></tr>
                                    <tr><td>18</td><td>プログラム(ローカルラベル)</td><td>STN_01_5_215Stn_Rorot</td><td>STN_01_5_215Stn_Rorot</td><td>一致</td><td></td></tr>
                                    <tr><td>19</td><td>プログラム</td><td>STN_02_1_216Stn_Common</td><td>STN_02_1_216Stn_Common</td><td>一致</td><td></td></tr>
                                </tbody>
                            </table>
                        </div>
                        <div class="vscroll short">
                            <button aria-label="上へ"><svg><use href="#up"/></svg></button>
                            <span class="thumb"></span>
                            <button aria-label="下へ"><svg><use href="#down"/></svg></button>
                        </div>
                    </div>
                    <footer class="summary">
                        <p>6件の相違があります</p>
                        <span class="lg pink">不一致行</span><span class="lg blue">照合元のみ存在する</span><span class="lg green">照合先のみ存在する</span>
                    </footer>
                </div>
            </main>

            <aside class="side">
                <section class="panel parts">
                    <header><h2>部品選択</h2><button aria-label="固定"><svg><use href="#pin"/></svg></button><button aria-label="閉じる"><svg><use href="#x"/></svg></button></header>
                    <input class="find" type="text" placeholder="(部品検索)" aria-label="部品検索">
                    <div class="sidetools">
                        <button aria-label="検索"><svg><use href="#findnext"/></svg></button>
                        <button aria-label="次を検索"><svg><use href="#findnext"/></svg></button>
                        <span class="sep"></span>
                        <button aria-label="一覧"><svg><use href="#book"/></svg></button>
                        <span class="sep"></span>
                        <button class="drop" aria-label="追加"><svg><use href="#addlbl"/></svg><svg class="arr"><use href="#down"/></svg></button>
                        <button aria-label="除去"><svg><use href="#dellbl"/></svg></button>
                    </div>
                    <div class="sidetools">
                        <button aria-label="お気に入り"><svg><use href="#star"/></svg></button>
                        <button aria-label="フォルダ"><svg><use href="#folder"/></svg></button>
                        <button aria-label="削除"><svg><use href="#delete"/></svg></button>
                        <span class="sep"></span>
                        <button class="drop" aria-label="表示"><svg><use href="#disp"/></svg><svg class="arr"><use href="#down"/></svg></button>
                    </div>
                    <div class="partlist">
                        <div class="target"><label for="target">表示対象:</label><select id="target"><option></option></select><svg><use href="#down"/></svg></div>
                        <div class="blank"></div>
                        <div class="list"></div>
                    </div>
                    <div class="btabs">
                        <button class="active">部...</button><button>お..</button><button>履..</button><button>ユ..</button><button>ラ..</button>
                    </div>
                </section>
                <section class="panel search">
                    <header><h2>検索と置換</h2><button aria-label="固定"><svg><use href="#pin"/></svg></button><button aria-label="閉じる"><svg><use href="#x"/></svg></button></header>
                    <button class="mode"><svg><use href="#devfind"/></svg>デバイス/ラベル検索(E)<svg class="arr"><use href="#down"/></svg></button>
                    <input class="scope" type="text" value="(プロジェクト全体)" aria-label="検索範囲">
                    <div class="opt"><button aria-label="オプション"><svg><use href="#option"/></svg></button></div>
                    <div class="form">
                        <p>検索デバイス/ラベル(N)</p>
                        <div class="btns"><button disabled>次を検索(F)</button><button class="all" disabled>す</button></div>
                        <a href="#">+ 検索/置換オプション(P)</a>
                        <div class="hscroll">
                            <button aria-label="左へ"><svg><use href="#lt"/></svg></button>
                            <span class="thumb"></span>
                            <button aria-label="右へ"><svg><use href="#rt"/></svg></button>
                        </div>
                    </div>
                </section>
            </aside>
        </div>

        <div class="outputbar"><button><svg><use href="#win"/></svg>出力</button></div>

        <div class="statusbar">
            <span></span>
            <span class="w-a"></span>
            <span class="w-b">BHMC4</span>
            <span class="w-c">R32SF</span>
            <span class="w-d">自局</span>
            <span class="w-e"></span>
            <span class="w-f"></span>
            <span class="w-g dim">CAP</span>
            <span class="w-h dim">NUM</span>
            <svg viewBox="0 0 12 12"><path d="M8 1h2v2H8zM8 4h2v2H8zM5 4h2v2H5zM8 7h2v2H8zM5 7h2v2H5zM2 7h2v2H2zM8 10h2v2H8zM5 10h2v2H5zM2 10h2v2H2z" fill="#dfe6f1"/></svg>
        </div>
    </div>
</div>

</body>
</html>
```

FILE: styles.css
```css
* {
    box-sizing: border-box;
}

body {
    margin: 0;
    padding: 25px 28px 24px;
    height: 100vh;
    display: flex;
    overflow: hidden;
    background: #fff;
    font: 12px/16px "Noto Sans", "Noto Sans CJK JP", sans-serif;
    font-feature-settings: "palt";
    color: #1b293e;
}

h1, h2, p, dl, dd, ul {
    margin: 0;
    padding: 0;
    font-size: 12px;
    font-weight: normal;
}

button, input, select {
    margin: 0;
    padding: 0;
    border: 0;
    border-radius: 0;
    background: none;
    font: inherit;
    font-feature-settings: inherit;
    color: inherit;
    flex: none;
    white-space: nowrap;
}

select {
    appearance: none;
    min-width: 0;
}

svg {
    width: 16px;
    height: 16px;
    flex: none;
    display: block;
}

.sprite {
    display: none;
}

.badge {
    font: bold 6px "Liberation Sans", sans-serif;
    fill: #fff;
    text-anchor: middle;
}

.badge.io {
    fill: #b3201f;
}

/* window frame */
.window {
    flex: 1;
    min-width: 0;
    display: flex;
    flex-direction: column;
    padding: 0 6px 7px;
    border: 1px solid #4b5765;
    border-radius: 6px 6px 2px 2px;
    background: linear-gradient(100deg, #d9e7f5, #b4cee8 30%, #bad2ea 60%, #a9c3de 80%, #c5daee);
}

.titlebar {
    height: 24px;
    flex: none;
    display: flex;
    align-items: center;
}

.titlebar h1 {
    flex: 1;
    min-width: 0;
    margin-left: 3px;
    white-space: nowrap;
    overflow: hidden;
    color: #111;
}

.winbtns {
    display: flex;
    align-self: flex-start;
    border: 1px solid #5a6a80;
    border-top: 0;
    border-radius: 0 0 4px 4px;
    overflow: hidden;
}

.winbtns button {
    width: 24px;
    height: 15px;
    display: flex;
    align-items: center;
    justify-content: center;
    border-right: 1px solid #5a6a80;
    background: linear-gradient(#dfe9f4, #b5c7db 50%, #a3b9d0 50%, #c3d6e8);
}

.winbtns .close {
    width: 39px;
    border-right: 0;
    background: linear-gradient(#e5a598, #cf6350 50%, #bd3a22 50%, #d6694f);
}

.winbtns svg {
    width: 12px;
    height: 10px;
}

.client {
    flex: 1;
    min-height: 0;
    display: flex;
    flex-direction: column;
    border-top: 1px solid #5d6b81;
    background: #9ba7bd;
}

/* menu */
.menubar {
    height: 26px;
    flex: none;
    display: flex;
    align-items: center;
    background: linear-gradient(#c9d2e2, #a9b4ca);
    color: #26344c;
}

.menubar > button {
    height: 22px;
    padding: 0 5px 0 6px;
    border: 1px solid transparent;
    border-radius: 2px;
}

.menubar .hot {
    border-color: #e5c365;
    background: linear-gradient(#fffcf0, #ffecb5);
}

.mdi {
    margin-left: auto;
    display: flex;
    gap: 4px;
    padding-right: 5px;
}

.mdi svg {
    width: 10px;
    height: 10px;
}

.grip {
    width: 2px;
    height: 16px;
    margin: 0 4px 0 3px;
    flex: none;
    background: repeating-linear-gradient(#6b7890 0 2px, transparent 2px 4px);
}

/* toolbars */
.toolrow {
    height: 24px;
    flex: none;
    display: flex;
    gap: 3px;
}

.toolrow.last {
    height: 22px;
}

.toolbar {
    display: flex;
    align-items: center;
    height: 24px;
    padding-left: 1px;
    flex: none;
    background: #bcc7d8;
    border-bottom: 1px solid #ccd5e3;
    color: #222;
}

.toolbar.edit {
    width: 600px;
}

.toolbar.rest {
    flex: 1;
    min-width: 0;
}

.toolbar.framed {
    height: 22px;
    border: 1px solid #b5985a;
    border-right: 0;
    background: #d8dfea;
}

.toolbar button, .navtools button, .sidetools button {
    width: 19px;
    height: 20px;
    display: flex;
    align-items: center;
    justify-content: center;
}

.toolbar .on {
    border: 1px solid #e5c365;
    background: #fff4cc;
}

.toolbar .drop, .sidetools .drop {
    width: 25px;
}

.toolbar .more {
    width: 10px;
    height: 23px;
    background: #d5dce9;
}

.toolbar.framed .more {
    height: 20px;
}

.toolbar .more svg {
    width: 8px;
    height: 20px;
}

.toolbar .end {
    margin-left: auto;
}

svg.arr {
    width: 6px;
    height: 6px;
}

.sep {
    width: 1px;
    height: 18px;
    margin: 0 3px;
    flex: none;
    background: #8591a8;
}

.combo {
    display: flex;
    align-items: center;
    height: 20px;
    background: linear-gradient(90deg, #fff, #fff) no-repeat left / calc(100% - 13px) 100%, #cbd4e3;
    flex: none;
}

.combo select {
    flex: 1;
    width: 20px;
    height: 20px;
    padding-left: 3px;
    color: #111;
}

.combo svg {
    width: 8px;
    height: 8px;
    margin: 0 3px;
}

.combo.quick {
    width: 88px;
}

.combo.max {
    width: 114px;
}

/* dock */
.dock {
    flex: 1;
    min-height: 0;
    display: flex;
    gap: 4px;
    background: #2b3c59;
}

.panel {
    display: flex;
    flex-direction: column;
    min-height: 0;
}

.panel > header {
    height: 21px;
    flex: none;
    display: flex;
    align-items: center;
    gap: 5px;
    padding: 0 4px;
    background: linear-gradient(#4a5d84, #3d4f74);
    color: #fff;
}

.panel h2 {
    flex: 1;
}

.panel > header svg {
    width: 10px;
    height: 10px;
}

.nav {
    width: 264px;
    flex: none;
    border-right: 1px solid #8ea6c8;
    border-bottom: 2px solid #a9bcd8;
}

.navtools {
    height: 27px;
    flex: none;
    display: flex;
    align-items: center;
    padding-left: 4px;
    background: #bcc7d8;
}

.navtools .sep {
    margin: 0 3px;
}

.navtools .drop {
    width: 26px;
}

.navtools .drop svg:first-child {
    width: 20px;
}

.combo.all {
    width: 86px;
}

.treebox {
    flex: 1;
    min-height: 0;
    display: flex;
    border-left: 2px solid #6f9ed0;
    background: #324768;
    overflow: hidden;
}

.tree {
    flex: 1;
    min-width: 0;
    display: flex;
    flex-direction: column;
    margin-bottom: -11px;
    list-style: none;
    color: #fff;
}

.tree li {
    flex: 1;
    min-height: 0;
    display: flex;
    align-items: center;
    gap: 3px;
    white-space: nowrap;
}

.tree svg {
    width: 14px;
    height: 14px;
}

.tree i, .tree button {
    width: 8px;
    height: 8px;
    margin-right: 2px;
    flex: none;
}

.tree button {
    background: linear-gradient(#2b3c59, #2b3c59) no-repeat center / 4px 2px, #f3f5f8;
}

.tree .plus {
    background: linear-gradient(#2b3c59, #2b3c59) no-repeat center / 4px 2px, linear-gradient(#2b3c59, #2b3c59) no-repeat center / 2px 4px, #f3f5f8;
}

.tree .l0 { padding-left: 4px; }
.tree .l1 { padding-left: 3px; }
.tree .l2 { padding-left: 15px; }
.tree .l3 { padding-left: 27px; }
.tree .l4 { padding-left: 40px; }
.tree .l5 { padding-left: 52px; }

.tree .selected {
    margin-right: 2px;
    background: #fbf0a6;
    color: #111;
}

.vscroll {
    width: 14px;
    margin-right: 2px;
    flex: none;
    display: flex;
    flex-direction: column;
    background: #f0f0f0;
    color: #444;
}

.vscroll button {
    height: 16px;
    display: flex;
    align-items: center;
    justify-content: center;
}

.vscroll svg {
    width: 7px;
    height: 7px;
}

.thumb {
    border: 1px solid #9a9a9a;
    border-radius: 2px;
    background:
        repeating-linear-gradient(#777 0 1px, transparent 1px 3px) no-repeat center / 6px 7px,
        linear-gradient(90deg, #f8f8f8, #d2d2d2);
}

.vscroll .thumb {
    height: 152px;
    margin-bottom: auto;
}

.vscroll.short .thumb {
    height: 26px;
}

/* document area */
.doc {
    flex: 1;
    min-width: 0;
    display: flex;
    flex-direction: column;
}

.tabs {
    height: 21px;
    flex: none;
    display: flex;
    align-items: flex-end;
    color: #fff;
}

.tab {
    height: 20px;
    display: flex;
    align-items: center;
    gap: 3px;
    padding: 0 4px;
}

.tab svg {
    width: 14px;
    height: 14px;
}

.tab:first-child {
    width: 195px;
    padding-left: 5px;
}

.tab.active {
    background: linear-gradient(#fffaeb, #ffe8a6);
    color: #111;
}

.tab svg.tx {
    width: 8px;
    height: 8px;
    margin-left: 2px;
    color: #75633d;
}

.tabnav {
    margin-left: auto;
    display: flex;
    align-self: center;
    gap: 4px;
    padding-right: 2px;
}

.tabnav svg {
    width: 8px;
    height: 8px;
}

.sheet {
    flex: 1;
    min-height: 0;
    display: flex;
    flex-direction: column;
    border: 3px solid #ffe8a6;
    border-left-width: 2px;
    border-right-width: 2px;
    background: #b9c6d8;
    color: #111;
}

.ln {
    width: 8px;
    height: 10px;
    margin-right: 5px;
}

.sheethead {
    height: 25px;
    flex: none;
    display: flex;
    align-items: center;
    padding: 0 5px 0 6px;
    border: solid #77808f;
    border-width: 1px 0 0 1px;
    background: #fff;
    font-size: 11px;
}

.sheethead button {
    display: flex;
    align-items: center;
    gap: 7px;
}

.sheethead button svg {
    width: 8px;
    height: 8px;
}

.sheethead .fold {
    margin-left: auto;
}

.sheethead .fold svg {
    width: 12px;
}

.info {
    height: 99px;
    flex: none;
    display: grid;
    grid-template-columns: 95px 5fr 95px 6fr;
    grid-auto-rows: 23px;
    align-items: center;
    align-content: start;
    padding: 5px 0 0 4px;
    background: linear-gradient(90deg, #b9c6d8, #fff 95%);
    font: 10px/16px Roboto, "Noto Sans CJK JP", sans-serif;
    font-feature-settings: "palt";
    white-space: nowrap;
}

.info dd {
    min-width: 0;
    overflow: hidden;
    font-size: 10px;
}

.info .jp {
    font-size: 11px;
}

.subtab {
    width: 176px;
    height: 22px;
    flex: none;
    display: flex;
    align-items: center;
    margin-left: 4px;
    padding-left: 6px;
    border: solid #7d9cc4;
    border-width: 1px 1px 0 0;
    background: #fff;
    font-size: 11px;
}

.results {
    flex: 1;
    min-height: 0;
    display: flex;
    margin: 0 4px 3px 3px;
    padding: 0 3px 1px 5px;
    border: 3px solid #eef3fa;
    border-top: 1px solid #7d9cc4;
    outline: 1px solid #98aac4;
    outline-offset: -3px;
    background: #fff;
    overflow: hidden;
}

.rows {
    flex: 1;
    min-width: 0;
    min-height: 0;
    padding-top: 3px;
    overflow: hidden;
}

table {
    width: 100%;
    table-layout: fixed;
    border-collapse: collapse;
    font: 10px/13px Roboto, "Noto Sans CJK JP", sans-serif;
    font-feature-settings: "palt";
}

.c-no { width: 24px; }
.c-kind { width: 116px; }
.c-name { width: 184px; }

th {
    height: 22px;
    padding: 0 4px;
    border-right: 1px solid #dfe1e6;
    border-bottom: 1px solid #d8dbe2;
    background: linear-gradient(#fff, #f1f3f6);
    font-size: 11px;
    font-weight: normal;
    text-align: left;
}

th:first-child {
    padding: 0 3px;
}

td {
    height: 14px;
    padding: 0 4px;
    border-right: 1px solid #e9e9ee;
    border-bottom: 1px solid #e9e9ee;
    white-space: nowrap;
}

td:first-child {
    padding: 0 3px;
}

td:nth-child(2) {
    font-size: 9px;
}

th:last-child, td:last-child {
    border-right: 0;
}

.diff td:not(:last-child) {
    background: #ee94bb;
}

.cur td:not(:last-child) {
    background: #428bcb;
    color: #fff;
}

.results .vscroll {
    margin-right: 0;
}

.summary {
    height: 20px;
    flex: none;
    display: flex;
    align-items: center;
    padding: 0 2px 0 6px;
    border-top: 1px solid #93a4bd;
    font-size: 10px;
}

.summary p {
    flex: 1;
    font-size: 10px;
}

.lg {
    padding: 0 3px;
    border: 1px solid #a1adbd;
    white-space: nowrap;
}

.pink { background: #f294bd; }
.blue { background: #93c3ea; }
.green { background: #bfe3b4; }

/* right side */
.side {
    width: 145px;
    flex: none;
    display: flex;
    flex-direction: column;
    gap: 4px;
    overflow: hidden;
}

.parts {
    background: #bcc7d8;
}

.find {
    height: 21px;
    width: auto;
    margin: 2px 0 0 3px;
    padding-left: 2px;
    border: 1px solid #fff;
    background: #f0f0f0;
}

.find::placeholder {
    color: #858585;
    opacity: 1;
}

.sidetools {
    height: 24px;
    flex: none;
    display: flex;
    align-items: center;
    margin-left: 3px;
    color: #757b85;
}

.sidetools svg:not(.arr) {
    width: 14px;
    height: 14px;
}

.sidetools + .sidetools {
    border-top: 1px solid #eef2f8;
}

.partlist {
    height: 128px;
    flex: none;
    display: flex;
    flex-direction: column;
    margin: 0 2px 0 1px;
    border: solid #1d4fae;
    border-width: 1px 2px 1px 1px;
    border-top-color: #f6c991;
    border-left-color: #f6c991;
    background: #d4e3f4;
}

.target {
    height: 22px;
    display: flex;
    align-items: center;
    padding-left: 8px;
    background: #f0f0f0;
    color: #111;
}

.target select {
    flex: 1;
}

.target svg {
    width: 12px;
    height: 20px;
    padding: 5px 1px;
    border: 1px solid #777;
    border-radius: 2px;
    background: linear-gradient(#f6f6f6, #d0d0d0);
}

.blank {
    height: 20px;
    border-bottom: 3px solid #2b4270;
    background: #fff;
}

.list {
    flex: 1;
    margin: 1px;
    border: 1px solid #8db4e6;
    background: #d4e3f4;
}

.btabs {
    height: 22px;
    flex: none;
    display: flex;
    align-items: flex-start;
    padding: 0 0 0 1px;
    background: #e8effa;
    color: #111;
}

.btabs button {
    width: 27px;
    height: 19px;
    border: solid #3565b8;
    border-width: 0 1px 1px 0;
    background: linear-gradient(#e6effb, #a6c5ee);
}

.btabs .active {
    border-color: #f6c991;
    background: #fdbd72;
}

.search {
    flex: 1;
    background: #bcc7d8;
}

.mode {
    height: 27px;
    display: flex;
    align-items: center;
    gap: 2px;
    padding-left: 5px;
    margin-bottom: 2px;
    border-bottom: 1px solid #eef2f8;
    font-size: 11px;
}

.mode svg:not(.arr) {
    width: 14px;
    height: 14px;
}

.scope {
    height: 20px;
    margin-left: 3px;
    padding-left: 3px;
    background: #fff;
    color: #111;
}

.opt {
    height: 23px;
    flex: none;
    display: flex;
    align-items: center;
    padding-left: 5px;
}

.opt svg {
    width: 14px;
    height: 14px;
}

.form {
    flex: 1;
    min-height: 0;
    display: flex;
    flex-direction: column;
    background: #f0f0f0;
    color: #111;
}

.form p {
    padding: 12px 0 0 8px;
    white-space: nowrap;
}

.btns {
    display: flex;
    gap: 7px;
    margin: 16px 2px 0 9px;
}

.btns button {
    width: 101px;
    height: 26px;
    border: 1px solid #b9b9b9;
    border-radius: 2px;
    background: #f4f4f4;
    color: #858585;
}

.btns .all {
    flex: 1;
    width: auto;
    min-width: 0;
    border-right: 0;
    border-radius: 2px 0 0 2px;
    text-align: right;
}

.form a {
    margin: 5px 0 0 13px;
    color: #1a3fa8;
    white-space: nowrap;
}

.hscroll {
    height: 16px;
    flex: none;
    display: flex;
    align-items: center;
    margin-top: auto;
    padding: 0 5px;
}

.hscroll svg {
    width: 7px;
    height: 7px;
}

.hscroll .thumb {
    width: 48px;
    height: 13px;
    margin: 0 auto 0 5px;
    background:
        repeating-linear-gradient(90deg, #777 0 1px, transparent 1px 3px) no-repeat center / 7px 6px,
        linear-gradient(#f8f8f8, #d2d2d2);
}

/* bottom bars */
.outputbar {
    height: 21px;
    flex: none;
    background: #2b3c59;
    color: #fff;
}

.outputbar button {
    height: 20px;
    display: flex;
    align-items: center;
    gap: 3px;
    padding: 0 3px 0 5px;
    background: #43567c;
}

.outputbar svg {
    width: 13px;
    height: 13px;
}

.statusbar {
    height: 19px;
    flex: none;
    display: flex;
    align-items: center;
    background: #273550;
    color: #dfe6f1;
}

.statusbar span {
    height: 17px;
    padding-left: 5px;
    flex: none;
    border-left: 1px solid #dfe6f1;
}

.statusbar span:first-child {
    flex: 1;
    border: 0;
}

.w-a { width: 162px; }
.w-b { width: 127px; }
.w-c { width: 101px; }
.w-d { width: 136px; }
.w-e { width: 144px; }
.w-f { width: 66px; }
.w-g { width: 29px; }
.w-h { width: 41px; }

.statusbar .dim {
    color: #55617a;
}

.statusbar svg {
    width: 12px;
    height: 12px;
}
```
